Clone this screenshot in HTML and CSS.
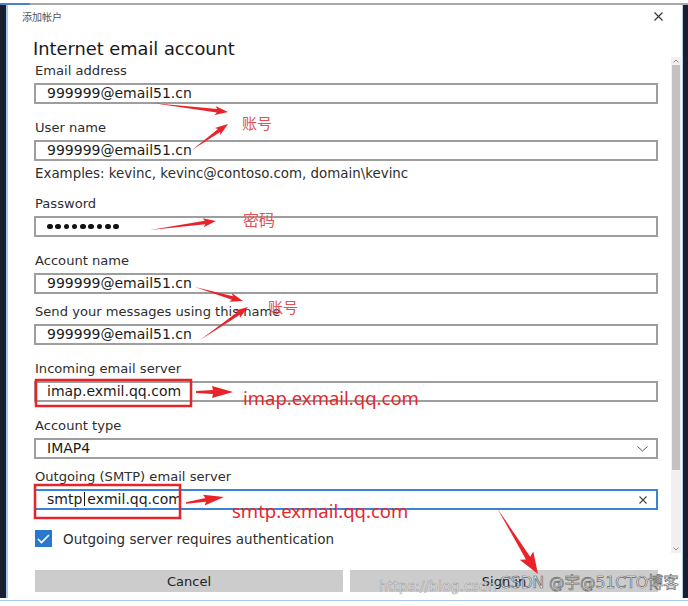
FILE: index.html
```html
<!DOCTYPE html>
<html>
<head>
<meta charset="utf-8">
<link rel="stylesheet" href="styles.css">
</head>
<body>
<div class="screen">
  <div class="topbar"><span class="tb-accent"></span><span class="tb-line"></span></div>
  <div class="frame">
    <div class="edge-left"></div>
    <div class="dialog">
      <div class="titlebar">
        <span class="title">添加帐户</span>
        <svg class="close" width="9" height="9" viewBox="0 0 9 9"><path d="M0.5 0.5 L8.5 8.5 M8.5 0.5 L0.5 8.5" stroke="#333" stroke-width="1.1" fill="none"/></svg>
      </div>
      <div class="main">
        <div class="form">
          <h1 class="heading">Internet email account</h1>
          <div class="field first">
            <div class="label">Email address</div>
            <div class="input">999999@email51.cn</div>
          </div>
          <div class="field">
            <div class="label">User name</div>
            <div class="input">999999@email51.cn</div>
          </div>
          <div class="hint">Examples: kevinc, kevinc@contoso.com, domain\kevinc</div>
          <div class="field after-hint">
            <div class="label">Password</div>
            <div class="input"><span class="dots"><i></i><i></i><i></i><i></i><i></i><i></i><i></i><i></i><i></i></span></div>
          </div>
          <div class="field">
            <div class="label">Account name</div>
            <div class="input">999999@email51.cn</div>
          </div>
          <div class="field tight">
            <div class="label">Send your messages using this name</div>
            <div class="input">999999@email51.cn</div>
          </div>
          <div class="field">
            <div class="label">Incoming email server</div>
            <div class="input">imap.exmil.qq.com</div>
          </div>
          <div class="field">
            <div class="label">Account type</div>
            <div class="input select"><span>IMAP4</span>
              <svg width="11" height="6" viewBox="0 0 11 6"><path d="M0.5 0.5 L5.5 5 L10.5 0.5" stroke="#555" stroke-width="1" fill="none"/></svg>
            </div>
          </div>
          <div class="field tight">
            <div class="label">Outgoing (SMTP) email server</div>
            <div class="input focus"><span>smtp<span class="caret"></span>exmil.qq.com</span>
              <svg width="8" height="8" viewBox="0 0 8 8"><path d="M0.5 0.5 L7.5 7.5 M7.5 0.5 L0.5 7.5" stroke="#444" stroke-width="1.1" fill="none"/></svg>
            </div>
          </div>
          <div class="check-row">
            <span class="checkbox"><svg width="13" height="10" viewBox="0 0 13 10"><path d="M1 5 L4.5 8.5 L12 1" stroke="#fff" stroke-width="1.6" fill="none"/></svg></span>
            <span class="check-text">Outgoing server requires authentication</span>
          </div>
        </div>
        <div class="scrollbar">
          <div class="sb-up"><svg width="6" height="4" viewBox="0 0 6 4"><path d="M0.5 3.5 L3 1 L5.5 3.5" stroke="#888" stroke-width="1" fill="none"/></svg></div>
          <div class="sb-thumb"></div>
          <div class="sb-space"></div>
          <div class="sb-down"><svg width="6" height="4" viewBox="0 0 6 4"><path d="M0.5 0.5 L3 3 L5.5 0.5" stroke="#888" stroke-width="1" fill="none"/></svg></div>
        </div>
      </div>
      <div class="buttons">
        <div class="btn">Cancel</div>
        <div class="btn">Sign in</div>
      </div>
    </div>
    <div class="edge-right"></div>
  </div>
  <div class="bottom"><span class="bottom-line"></span></div>

  <svg class="annot" width="688" height="606" viewBox="0 0 688 606">
    <g fill="#e8232a">
      <polygon transform="translate(152,103) rotate(6.75)" points="0,0 65.5,-1.8 63.5,-4.5 76.5,0 63.5,4.5 65.5,1.8"/>
      <polygon transform="translate(192,150) rotate(-35.8)" points="0,0 33.4,-1.8 31.4,-4.5 44.4,0 31.4,4.5 33.4,1.8"/>
      <polygon transform="translate(150,230) rotate(-7.8)" points="0,0 55.6,-1.8 53.6,-4.5 66.6,0 53.6,4.5 55.6,1.8"/>
      <polygon transform="translate(195,287) rotate(16.3)" points="0,0 39,-1.8 37,-4.5 50,0 37,4.5 39,1.8"/>
      <polygon transform="translate(200,340) rotate(-34.5)" points="0,0 47.2,-1.8 45.2,-4.5 58.2,0 45.2,4.5 47.2,1.8"/>
      <polygon transform="translate(196,392)" points="0,-1 17,-2 16,-6 37,0 16,6 17,2 0,1"/>
      <polygon transform="translate(186,503) rotate(-9)" points="0,-0.8 20,-2 18,-5.5 38.5,0 18,5.5 20,2 0,0.8"/>
      <polygon transform="translate(497,508) rotate(58.2)" points="0,0 59,-2.5 56,-8 77.7,0 56,8 59,2.5"/>
    </g>
    <g fill="none" stroke="#e3262b" stroke-width="2.5">
      <rect x="36" y="380" width="155" height="26"/>
      <rect x="35" y="485" width="145" height="33"/>
    </g>
  </svg>
  <span class="note cn n1">账号</span>
  <span class="note cn n2">密码</span>
  <span class="note cn n3">账号</span>
  <span class="note en n4">imap.exmail.qq.com</span>
  <span class="note en n5">smtp.exmail.qq.com</span>
  <span class="wm wm-url">https://blog.csdn</span>
  <span class="wm wm-csdn">CSDN @宇@51CTO博客</span>
</div>
</body>
</html>
```

FILE: styles.css
```css
* { box-sizing: border-box; margin: 0; padding: 0; }
html, body { width: 688px; height: 606px; overflow: hidden; background: #fff; }
body { font-family: "DejaVu Sans", "Noto Sans CJK SC", sans-serif; color: #222; }

.screen { position: relative; width: 688px; height: 606px; display: flex; flex-direction: column; }

.topbar { height: 5px; padding-top: 3px; display: flex; background: #fff; }
.tb-accent { width: 30px; background: #4a84c4; }
.tb-line { flex: 1; background: #a8a8a8; }

.frame { height: 593px; display: flex; }
.edge-left { width: 8px; background: #16202e; border-right: 2px solid #a9c9ea; }
.edge-right { width: 6px; background: #16202e; border-left: 1px solid #b9cde2; }

.dialog { flex: 1; display: flex; flex-direction: column; background: #fff; padding-bottom: 6px; }

.titlebar { height: 22px; display: flex; align-items: center; justify-content: space-between; padding: 0 19px 0 14px; margin-bottom: 2px; }
.title { font-family: "Noto Sans CJK SC", sans-serif; font-size: 10px; color: #555; }

.main { display: flex; }
.form { flex: 1; padding: 9px 13px 0 26px; }

.heading { font-size: 17.8px; font-weight: normal; line-height: 22px; color: #1a1a1a; margin-left: -1px; }

.field { margin-top: 16px; }
.field.first { margin-top: 3px; }
.field.tight { margin-top: 10px; }
.field.after-hint { margin-top: 14px; }

.label { font-size: 13.1px; line-height: 16px; color: #2e2e2e; margin-left: 1px; }

.input { margin-top: 4px; height: 21px; border: 2px solid #9e9e9e; padding: 0 9px 0 11px; display: flex; align-items: center; justify-content: space-between; font-size: 14px; line-height: 17px; color: #1b1b1b; }
.input.select { padding-right: 8px; }
.input.focus { border-color: #3a84d4; }

.caret { display: inline-block; width: 1px; height: 14px; background: #111; margin: 0 2px; vertical-align: -2px; }

.dots { display: flex; gap: 2.8px; }
.dots i { width: 5.5px; height: 5.5px; border-radius: 50%; background: #111; }

.hint { margin-top: 5px; font-size: 13.4px; line-height: 16px; color: #2e2e2e; margin-left: 1px; }

.check-row { margin-top: 20px; display: flex; align-items: center; gap: 11px; margin-left: 1px; }
.checkbox { width: 17px; height: 17px; background: #2a78cd; display: flex; align-items: center; justify-content: center; }
.check-text { font-size: 13.5px; line-height: 16px; color: #2e2e2e; }

.scrollbar { width: 10px; height: 496px; margin: 28px 1px 0 0; background: #f0f0f0; display: flex; flex-direction: column; align-items: center; }
.sb-up, .sb-down { height: 8px; display: flex; align-items: center; justify-content: center; }
.sb-thumb { width: 8px; height: 405px; background: #c2c2c2; }
.sb-space { flex: 1; }

.buttons { margin-top: auto; display: flex; gap: 7px; padding: 0 24px 0 27px; }
.btn { flex: 1; height: 22px; background: #cccccc; display: flex; align-items: center; justify-content: center; font-size: 13px; color: #222; }

.bottom { flex: 1; padding-top: 2px; }
.bottom-line { display: block; height: 1px; background: #a9c9ea; }

.annot { position: absolute; left: 0; top: 0; pointer-events: none; }

.note { position: absolute; color: #e5282e; white-space: nowrap; }
.note.cn { font-family: "Noto Sans CJK SC", sans-serif; color: #e25050; }
.n1 { left: 242px; top: 115px; font-size: 15px; line-height: 16px; }
.n2 { left: 243px; top: 211px; font-size: 16px; line-height: 17px; }
.n3 { left: 268px; top: 299px; font-size: 15px; line-height: 16px; }
.note.en { font-family: "Noto Sans", sans-serif; font-size: 18.5px; line-height: 20px; }
.n4 { left: 243px; top: 388px; }
.n5 { left: 232px; top: 501px; }

.wm { position: absolute; white-space: nowrap; font-family: "DejaVu Sans", "Noto Sans CJK SC", sans-serif; color: rgba(255,255,255,0.75); }
.wm-url { left: 379px; top: 578px; font-size: 14px; line-height: 16px; -webkit-text-stroke: 0.6px rgba(130,130,130,0.7); }
.wm-csdn { left: 500px; top: 574px; font-size: 15.5px; line-height: 18px; -webkit-text-stroke: 0.7px rgba(60,60,60,0.75); }
```
